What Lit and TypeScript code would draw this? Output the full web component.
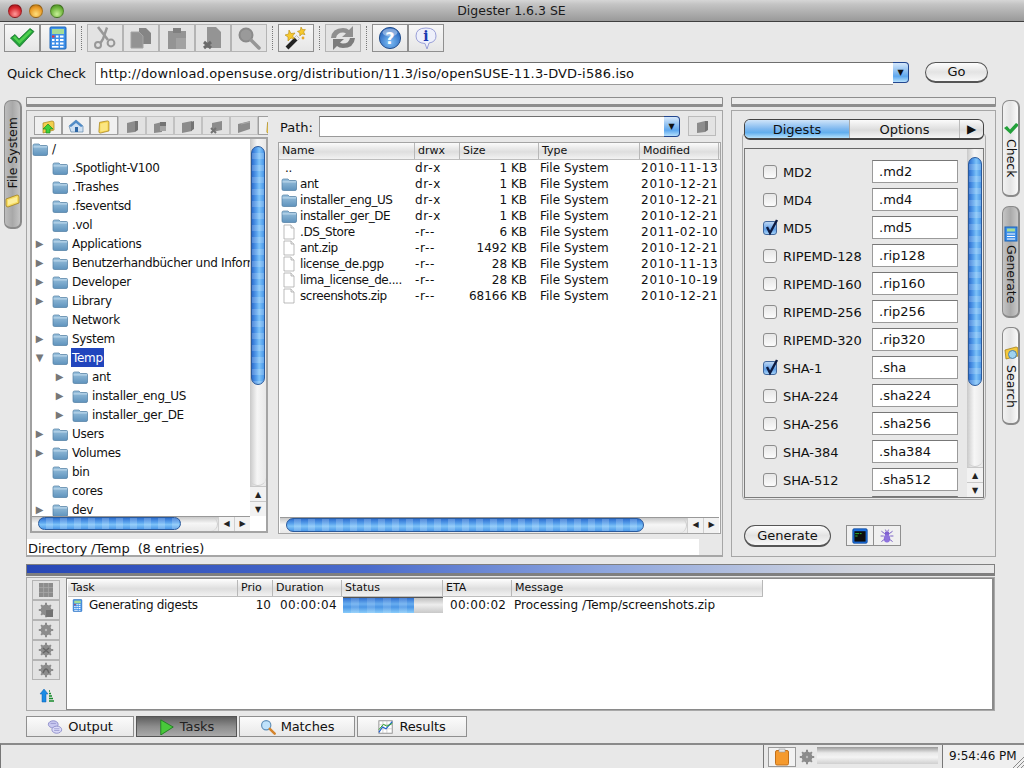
import { LitElement, html, css, svg } from "lit";
import { customElement } from "lit/decorators.js";

const g = "#8c8c8c";
const gd = "#737373";

const view = (s: number, body: unknown, vb = 24, cls = "") =>
  html`<svg class="ic ${cls}" width=${s} height=${s} viewBox="0 0 ${vb} ${vb}">${body}</svg>`;

const folderBody = svg`
  <path d="M1 4.5 Q1 3 2.5 3 H7 L8.5 4.5 H14.5 Q15.5 4.5 15.5 5.5 V13 Q15.5 14.5 14 14.5 H2.5 Q1 14.5 1 13 Z" fill="url(#fold)" stroke="#4d7ba0" stroke-width=".7"/>
  <rect x="1.4" y="5.4" width="13.7" height="1" fill="#c3dcee"/>`;
const folder = () => view(16, folderBody, 16, "fold");
const fileIc = () => view(16, svg`<path d="M3 1 H10 L13 4 V15 H3 Z" fill="#fff" stroke="#a9a9a9" stroke-width=".8"/><path d="M10 1 V4 H13" fill="#eee" stroke="#a9a9a9" stroke-width=".8"/>`, 16);

const yellowFolder = svg`<path d="M6 5 L17 3 Q19 3 19 5 V17 L7 20 Q5 20 5 18 Z" fill="#f6d34a" stroke="#a5811c"/><path d="M7 7 L17 5 V16 L7 18 Z" fill="#fbe682"/>`;

const icons: Record<string, unknown> = {
  check: view(28, svg`<path d="M2.5 14 L7 10.5 L11 15 L22 4.5 L26 7.5 L11.5 23 Z" fill="#23a13a" stroke="#16752a" stroke-width=".8"/><path d="M5 13.5 L7 12 L11 16.5 L22 6 L24 7.5 L11.5 20 Z" fill="#4fd04e"/>`, 28),
  calc: view(24, svg`<rect x="4" y="1" width="16" height="22" rx="1" fill="#3e8fe8" stroke="#1b64b8"/><rect x="6" y="3" width="12" height="5" fill="#a6dd96"/><rect x="6" y="9.5" width="2.5" height="2" fill="#e33"/><rect x="10" y="9.5" width="2.5" height="2" fill="#fff"/><rect x="14" y="9.5" width="3.5" height="2" fill="#fff"/><rect x="6" y="13" width="2.5" height="2" fill="#fff"/><rect x="10" y="13" width="2.5" height="2" fill="#fff"/><rect x="14" y="13" width="3.5" height="2" fill="#fff"/><rect x="6" y="16.5" width="2.5" height="2" fill="#fff"/><rect x="10" y="16.5" width="2.5" height="2" fill="#fff"/><rect x="14" y="16.5" width="3.5" height="2" fill="#fff"/><rect x="6" y="20" width="6.5" height="1.6" fill="#fff"/><rect x="14" y="20" width="3.5" height="1.6" fill="#fff"/>`),
  cut: view(24, svg`<path d="M5 1 L15 14" stroke="#989898" stroke-width="2.6"/><path d="M14 1.5 L10 13 L7.5 17" stroke="#989898" stroke-width="2.4" fill="none"/><circle cx="5" cy="19" r="3" fill="none" stroke="#989898" stroke-width="2"/><circle cx="18" cy="17" r="3.4" fill="none" stroke="#989898" stroke-width="2"/>`),
  copy: view(24, svg`<path d="M10 2 H17 L22 7 V18 H10 Z" fill="#858585"/><path d="M2 6 H10 L14 10 V22 H2 Z" fill="#939393" stroke="#a4a4a4"/>`),
  paste: view(24, svg`<rect x="3" y="5" width="18" height="18" fill="#949494"/><rect x="8" y="2" width="8" height="5" fill="#808080"/><rect x="11" y="12" width="10" height="11" fill="#a2a2a2"/>`),
  del: view(24, svg`<path d="M6 1 H15 L20 6 V22 H6 Z" fill="#949494"/><path d="M3 16 L10 22 M10 16 L3 22" stroke="#6a6a6a" stroke-width="3"/>`),
  find: view(24, svg`<circle cx="9" cy="9" r="6.5" fill="#9a9a9a" stroke="#8a8a8a" stroke-width="2"/><path d="M14 14 L22 22" stroke="#969696" stroke-width="3.5" stroke-linecap="round"/>`),
  wand: view(24, svg`<path d="M3 22 L14 11" stroke="#222" stroke-width="4"/><path d="M12 13 L14 11" stroke="#eee" stroke-width="4"/><path d="M5 4 L7 7.5 L11 7 L8.6 10 L10.4 13 L7 12 L4 15 L4 11 L1 9 L4.6 8 Z" fill="#f7c92c" stroke="#b58a10" stroke-width=".6"/><path d="M17 1 L18.4 3.6 L21.4 3.6 L19.6 6 L21 8.6 L18 8 L15.8 10 L15.8 7 L13.4 5.4 L16.4 4.4 Z" fill="#f7c92c" stroke="#b58a10" stroke-width=".6"/><circle cx="19" cy="12" r="1.4" fill="#e8a828"/>`),
  refresh: view(26, svg`<path d="M1 13 Q2 3 13 3 Q17 3 19 5 L23 1 V12 H12 L16 8.5 Q14.5 7.5 13 7.5 Q7 7.5 6 13 Z" fill="#8f8f8f"/><path d="M25 13 Q24 23 13 23 Q9 23 7 21 L3 25 V14 H14 L10 17.5 Q11.5 18.5 13 18.5 Q19 18.5 20 13 Z" fill="#7c7c7c"/>`, 26),
  help: html`<svg class="ic" width="24" height="24" viewBox="0 0 24 24"><circle cx="12" cy="12" r="10.6" fill="url(#blueb)" stroke="#27518d"/><ellipse cx="12" cy="6.5" rx="7.5" ry="4" fill="#fff" opacity=".4"/><text x="12" y="17.5" text-anchor="middle" class="helpq">?</text></svg>`,
  info: html`<svg class="ic" width="24" height="24" viewBox="0 0 24 24"><path d="M2 10 Q2 2 12 2 Q22 2 22 10 Q22 16 15 17 L13 23 L11 17.5 Q2 17 2 10 Z" fill="#eef0fb" stroke="#9aa0d8"/><text x="12" y="15" text-anchor="middle" class="infoi">i</text></svg>`,
  up: view(16, svg`<path d="M3 5 L12 3 Q14 3 14 5 V12 L3 15 Z" fill="#f3cf4d" stroke="#a5811c" stroke-width=".7"/><path d="M8 6 L13 11 H10 V15 H6 V11 H3 Z" fill="#3ed13a" stroke="#1f8a1e" stroke-width=".7"/>`, 16),
  home: view(16, svg`<path d="M1 8 L8 2 L15 8 V14 H3 Z" fill="#cfe0f2" stroke="#5f87ad" stroke-width=".7"/><path d="M1 8 L8 2 L15 8 L13 9 L8 5 L3 9 Z" fill="#4f8bc7"/><rect x="7" y="9" width="3" height="5" fill="#2d66a5"/>`, 16),
  yfolder: view(16, svg`<g transform="scale(.72) translate(-1 1)">${yellowFolder}</g>`, 16),
  gf1: view(16, svg`<path d="M3 5 L11 3 V14 L3 15 Z" fill="${g}"/><path d="M11 3 L14 3 V12 L11 14 Z" fill="${gd}"/>`, 16),
  gf2: view(16, svg`<path d="M2 6 L10 4 V14 L2 15 Z" fill="${g}"/><rect x="8" y="4" width="6" height="8" fill="${gd}"/><rect x="8" y="8" width="6" height="5" fill="#a4a4a4"/>`, 16),
  gf3: view(16, svg`<path d="M2 5 L12 3 V13 L2 15 Z" fill="${g}"/><path d="M11 4 L14 3 V11 L11 13 Z" fill="${gd}"/>`, 16),
  gf4: view(16, svg`<path d="M4 5 L14 3 V12 L4 14 Z" fill="${g}"/><path d="M3 10 L8 15 M8 10 L3 15" stroke="${gd}" stroke-width="2"/>`, 16),
  gf5: view(16, svg`<path d="M2 6 L14 3 V11 L2 15 Z" fill="${g}"/><path d="M5 6 L14 4" stroke="#aaa"/>`, 16),
  gridg: view(16, svg`<rect x="1" y="1" width="14" height="14" fill="${g}"/><path d="M5.6 1 V15 M10.4 1 V15 M1 5.6 H15 M1 10.4 H15" stroke="#a8a8a8" stroke-width=".8"/>`, 16),
  sort: view(16, svg`<path d="M1 6 L5 1 L9 6 H7 V14 H3 V6 Z" fill="#1a8be4" stroke="#0d5fb0" stroke-width=".5"/><path d="M10 13 H15 M10 10.5 H14 M10 8 H13 M10 5.5 H12 M10 3 H11" stroke="#178a2d" stroke-width="1.4"/>`, 16),
  term: view(20, svg`<rect x="1" y="1" width="18" height="18" rx="1.5" fill="#1c6fe0" stroke="#0d4a9c"/><rect x="3" y="4" width="14" height="13" fill="#0d0d0d"/><path d="M4 7 H9 M10 7 H12 M4 10 H7" stroke="#39d43c" stroke-width="1"/>`, 20),
  bug: view(20, svg`<ellipse cx="10" cy="7" rx="3" ry="3" fill="#7f5fd0"/><ellipse cx="10" cy="13" rx="4" ry="5" fill="#8e72dd"/><path d="M3 4 L7 7 M17 4 L13 7 M2 10 H6 M18 10 H14 M3 17 L7 14 M17 17 L13 14 M8 2 L9 4 M12 2 L11 4" stroke="#6a4fc0" stroke-width="1.1"/>`, 20),
  output: view(18, svg`<ellipse cx="7" cy="6" rx="5.5" ry="4" fill="#c8c8f0" stroke="#8a8ac8"/><ellipse cx="11" cy="12" rx="5.5" ry="4" fill="#dcdcf8" stroke="#8a8ac8"/><path d="M8 11 H14 M8 13 H14 M4 5 H10" stroke="#8a8ac8" stroke-width=".8"/>`, 18),
  play: view(18, svg`<path d="M2 1 L16 9 L2 18 Z" fill="#48c83a" stroke="#1c7c1e"/>`, 18),
  search: view(18, svg`<circle cx="7" cy="7" r="5.2" fill="#bfe2fb" stroke="#5f8fb8" stroke-width="1.3"/><path d="M11 11 L16.5 16.5" stroke="#d4832a" stroke-width="2.8" stroke-linecap="round"/>`, 18),
  results: view(18, svg`<rect x="1" y="2" width="15" height="14" fill="#fff" stroke="#8a8a8a"/><path d="M1 6.5 H16 M1 11 H16 M5.5 2 V16 M10 2 V16" stroke="#bbb" stroke-width=".7"/><path d="M1 15 L5 9 L9 11 L16 3" stroke="#1e5fd0" stroke-width="1.3" fill="none"/><path d="M1 12 L6 6 L10 8 L16 5" stroke="#2ca52c" stroke-width="1.1" fill="none"/>`, 18),
  clip: view(18, svg`<rect x="2.5" y="2.5" width="13" height="14.5" rx="1.5" fill="#f59a2e" stroke="#c2701a"/><rect x="6" y="1" width="6" height="3" fill="#e4e4e4" stroke="#999" stroke-width=".6"/>`, 18),
  search2: view(16, svg`<path d="M2 4 L13 1 Q15 1 15 3 V10 L3 13 Z" fill="#f3c83c" stroke="#a5811c" stroke-width=".8"/><circle cx="9.5" cy="8.5" r="4" fill="#9fd3ef" stroke="#4c7fa8"/>`, 16),
  foldtab: view(16, svg`<path d="M1 7 L12 3 Q14 3 14 5 V11 L3 15 Q1 15 1 13 Z" fill="#f7dc62" stroke="#a5811c" stroke-width=".8"/><path d="M3 8 L12 5 V10 L3 13 Z" fill="#fcee9c"/>`, 16),
};

const gear = (kind: number) => view(16, svg`
  <g fill="${g}"><circle cx="8" cy="8" r="5.4"/><path d="M7 0.8 H9 V3 H7 Z M7 13 H9 V15.2 H7 Z M0.8 7 H3 V9 H0.8 Z M13 7 H15.2 V9 H13 Z M2.4 3.8 L3.8 2.4 L5.4 4 L4 5.4 Z M12 10.6 L13.6 12.2 L12.2 13.6 L10.6 12 Z M2.4 12.2 L4 10.6 L5.4 12 L3.8 13.6 Z M10.6 4 L12.2 2.4 L13.6 3.8 L12 5.4 Z"/></g>
  ${kind === 0 ? svg`<rect x="8" y="8" width="7" height="7" fill="${gd}"/>` : kind === 1 ? svg`<circle cx="8" cy="8" r="1.2" fill="#bbb"/>` : kind === 2 ? svg`<path d="M5 6 L11 11 M11 6 L5 11" stroke="#666" stroke-width="1.4"/>` : svg`<path d="M5 11 Q8 3 11 11" stroke="#666" stroke-width="1.4" fill="none"/>`}`, 16);

type Tree = [number, string, string];
const tree: Tree[] = [
  [0, "", "/"],
  [1, "", ".Spotlight-V100"],
  [1, "", ".Trashes"],
  [1, "", ".fseventsd"],
  [1, "", ".vol"],
  [1, "r", "Applications"],
  [1, "r", "Benutzerhandbücher und Informationen"],
  [1, "r", "Developer"],
  [1, "r", "Library"],
  [1, "", "Network"],
  [1, "r", "System"],
  [1, "d", "Temp"],
  [2, "r", "ant"],
  [2, "r", "installer_eng_US"],
  [2, "r", "installer_ger_DE"],
  [1, "r", "Users"],
  [1, "r", "Volumes"],
  [1, "", "bin"],
  [1, "", "cores"],
  [1, "r", "dev"],
];
const files = [
  ["", "..", "dr-x", "1 KB", "2010-11-13"],
  ["d", "ant", "dr-x", "1 KB", "2010-12-21"],
  ["d", "installer_eng_US", "dr-x", "1 KB", "2010-12-21"],
  ["d", "installer_ger_DE", "dr-x", "1 KB", "2010-12-21"],
  ["f", ".DS_Store", "-r--", "6 KB", "2011-02-10"],
  ["f", "ant.zip", "-r--", "1492 KB", "2010-12-21"],
  ["f", "license_de.pgp", "-r--", "28 KB", "2010-11-13"],
  ["f", "lima_license_de....", "-r--", "28 KB", "2010-10-19"],
  ["f", "screenshots.zip", "-r--", "68166 KB", "2010-12-21"],
];
const digests: [string, string, boolean][] = [
  ["MD2", ".md2", false],
  ["MD4", ".md4", false],
  ["MD5", ".md5", true],
  ["RIPEMD-128", ".rip128", false],
  ["RIPEMD-160", ".rip160", false],
  ["RIPEMD-256", ".rip256", false],
  ["RIPEMD-320", ".rip320", false],
  ["SHA-1", ".sha", true],
  ["SHA-224", ".sha224", false],
  ["SHA-256", ".sha256", false],
  ["SHA-384", ".sha384", false],
  ["SHA-512", ".sha512", false],
  ["", "", false],
];

const vbar = (top: number, h: number) => html`
  <div class="vbar">
    <div class="vthumb" style="margin-top:${top}px;height:${h}px"></div>
    <div class="vtrack"></div>
    <div class="varrow">▲</div>
    <div class="varrow">▼</div>
  </div>`;
const hbar = (left: number, w: number, cls = "") => html`
  <div class="hbar ${cls}">
    <div class="hthumb" style="margin-left:${left}px;width:${w}px"></div>
    <div class="htrack"></div>
    <div class="harrow">◀</div>
    <div class="harrow">▶</div>
  </div>`;

@customElement("app-root")
export class AppRoot extends LitElement {
  static styles = css`
    :host { display: block; width: 1024px; height: 768px; overflow: hidden; }
    * { box-sizing: border-box; }
    .app { width: 1024px; height: 768px; display: flex; flex-direction: column; background: #e8e8e8; color: #111; overflow: hidden;
      font: 12px/16px "DejaVu Sans", sans-serif; }
    .ic { display: block; flex: none; }
    .defs { display: block; width: 0; height: 0; flex: none; }
    .helpq { font: bold 16px "DejaVu Sans", sans-serif; fill: #fff; }
    .infoi { font: bold 14px "DejaVu Serif", serif; fill: #1a39b0; }

    .title { height: 22px; flex: none; border-bottom: 1px solid #3f3f3f; background: linear-gradient(#d6d6d6, #c4c4c4 20%, #999); display: flex; align-items: center; padding: 0 8px; gap: 7px; }
    .dot { width: 14px; height: 14px; border-radius: 50%; border: 1px solid #0004; }
    .dot.r { background: radial-gradient(circle at 50% 75%, #ff9a9a, #d5262c 60%, #8e1015); }
    .dot.y { background: radial-gradient(circle at 50% 75%, #ffdf7c, #e99a25 60%, #a0620c); }
    .dot.g { background: radial-gradient(circle at 50% 75%, #c8f098, #6cb33a 60%, #3c7a1a); }
    .titletext { flex: 1; text-align: center; font-size: 12.5px; margin-right: 64px; color: #1a1a1a; }

    .toolbar { height: 30px; flex: none; padding: 2px 0 0 4px; display: flex; }
    .tb { width: 36px; height: 28px; border: 1px solid #8f8f8f; background: linear-gradient(#f7f7f7, #e6e6e6); display: flex; align-items: center; justify-content: center; margin-right: 0; }
    .tb.dis { border-color: #b4b4b4; background: #e3e3e3; }
    .sep { width: 1px; height: 24px; margin: 2px 5px 0 5px; border-left: 1px dotted #777; }

    .quick { flex: none; margin-top: 10px; height: 23px; display: flex; padding-left: 7px; }
    .qlabel { width: 88px; font-size: 13px; line-height: 24px; letter-spacing: -.2px; }
    .combo { background: #fff; border: 1px solid #9a9a9a; border-top-color: #6f6f6f; border-right: 0; font-size: 13px; line-height: 22px; padding-left: 4px; }
    .combo.url { width: 798px; letter-spacing: .15px; white-space: nowrap; overflow: hidden; }
    .cbtn { width: 16px; height: 21px; border: 1px solid #23478f; border-left: 0; border-radius: 0 4px 4px 0; background: linear-gradient(#d6e8fb, #79b4ef 55%, #5da8ef 70%, #b6e0fc); display: flex; justify-content: center; align-items: center; font-size: 8px; color: #111; }
    .pill { border: 1px solid #555; border-bottom-width: 2px; border-radius: 11px; background: linear-gradient(#fdfdfd, #e3e3e3 50%, #f7f7f7); text-align: center; font-size: 13px; }
    .go { margin-left: 16px; width: 63px; height: 21px; line-height: 18px; }

    .main { flex: none; margin-top: 12px; height: 460px; display: flex; }
    .ltabs { width: 26px; padding: 3px 0 0 4px; }
    .vtab { width: 18px; border: 1px solid #8a8a8a; border-width: 1px 2px 2px 1px; border-radius: 7px; background: linear-gradient(90deg, #f2f2f2, #e4e4e4 50%, #fafafa); display: flex; align-items: center; font-size: 12.5px; gap: 3px; overflow: hidden; }
    .vtab span { writing-mode: vertical-lr; line-height: 16px; }
    .ltab { height: 129px; background: linear-gradient(90deg, #bcbcbc, #a8a8a8 50%, #c4c4c4); flex-direction: column-reverse; justify-content: flex-start; padding-bottom: 19px; }
    .ltab span { transform: rotate(180deg); }
    .lcol { width: 697px; }
    .rcol { width: 265px; margin-left: 8px; }
    .rtabs { padding-left: 6px; padding-top: 3px; display: flex; flex-direction: column; gap: 9px; width: 24px; }
    .rtab { flex-direction: column; padding-top: 19px; }
    .rtab.check { height: 97px; }
    .rtab.gen { height: 112px; background: linear-gradient(90deg, #c4c4c4, #aaa 50%, #c8c8c8); }
    .rtab.sea { height: 98px; padding-top: 18px; }
    .split { height: 10px; border: 1px solid #8d8d8d; border-bottom-width: 3px; background: #ececec; border-radius: 1px; margin-bottom: 3px; }

    .panel { height: 447px; border: 1px solid #a6a6a6; }
    .browser { height: 428px; display: flex; }
    .lside { width: 238px; margin-left: 3px; padding-top: 5px; }
    .ltools { height: 19px; margin-bottom: 2px; padding-left: 4px; display: flex; overflow: hidden; }
    .lt { width: 28px; height: 19px; flex: none; border: 1px solid #9f9f9f; background: #f0f0f0; display: flex; align-items: center; justify-content: center; }
    .lt.dis { background: #e2e2e2; border-color: #c2c2c2; }
    .tree { height: 396px; border: 2px solid #a4a4a4; border-left-color: #a0a0a0; display: grid; grid-template-columns: 1fr 16px; grid-template-rows: 1fr 15px; background: #fff; overflow: hidden; }
    .tlist { overflow: hidden; min-width: 0; }
    .trow { height: 19px; display: flex; align-items: center; white-space: nowrap; }
    .trow .txt { padding: 0 1px; line-height: 19px; letter-spacing: -.32px; height: 19px; margin-top: 1px; }
    .trow .arrow { width: 20px; flex: none; font-size: 10px; color: #777; text-align: center; padding-right: 5px; }
    .trow .fold { margin-right: 3px; }
    .l0 .arrow { width: 0; padding: 0; }
    .l2 { padding-left: 20px; }
    .sel .txt { background: #2145bd; color: #fff; margin-top: 0; line-height: 21px; }

    .vbar { display: flex; flex-direction: column; background: linear-gradient(90deg, #c9c9c9, #f6f6f6 45%, #e8e8e8); min-height: 0; overflow: hidden; }
    .vthumb { flex: none; margin: 0 1px; border: 1px solid #2a5a9c; border-radius: 7px; background: repeating-linear-gradient(transparent 0 6px, #ffffff30 6px 12px), linear-gradient(90deg, #2d6fd0, #5ba4ee 40%, #7ec3f8 60%, #4a97e8); }
    .vtrack { flex: 1; border-radius: 0 0 8px 8px; border-bottom: 1px solid #cfcfcf; }
    .varrow { height: 15px; flex: none; font-size: 8px; line-height: 15px; text-align: center; background: #f2f2f2; border-top: 1px solid #c8c8c8; color: #222; }
    .hbar { display: flex; background: linear-gradient(#c9c9c9, #f6f6f6 45%, #e8e8e8); overflow: hidden; border-top: 1px solid #999; }
    .hthumb { flex: none; border: 1px solid #2a5a9c; border-radius: 7px; margin-bottom: 1px; background: repeating-linear-gradient(90deg, transparent 0 7px, #ffffff30 7px 14px), linear-gradient(#2d6fd0, #5ba4ee 40%, #7ec3f8 60%, #4a97e8); }
    .htrack { flex: 1; border-radius: 0 8px 8px 0; border-right: 1px solid #cfcfcf; }
    .harrow { width: 16px; flex: none; font-size: 8px; line-height: 14px; text-align: center; background: #f2f2f2; border-left: 1px solid #cfcfcf; color: #222; }
    .corner { background: #fff; }

    .rside { width: 443px; margin-left: 10px; padding-top: 5px; }
    .pathrow { height: 21px; margin-bottom: 5px; display: flex; }
    .plabel { width: 41px; padding-left: 2px; font-size: 13px; line-height: 23px; }
    .combo.path { width: 345px; }
    .pbtn { margin-left: 8px; width: 28px; height: 20px; border: 1px solid #bbb; background: #e3e3e3; display: flex; align-items: center; justify-content: center; }
    .ftable { height: 392px; border: 1px solid #a4a4a4; background: #fff; display: flex; flex-direction: column; }
    .hdr { display: grid; flex: none; height: 17px; background: linear-gradient(#fbfbfb, #dedede 55%, #f2f2f2); border-bottom: 1px solid #bdbdbd; font-size: 11px; line-height: 16px; }
    .hdr div { padding-left: 3px; border-right: 1px solid #b8b8b8; white-space: nowrap; overflow: hidden; }
    .fcols { grid-template-columns: 136px 45px 79px 101px 79px; }
    .frows { flex: 1; overflow: hidden; }
    .frow { height: 16px; display: grid; grid-template-columns: 136px 45px 79px 101px 79px; line-height: 16px; white-space: nowrap; }
    .fname { display: flex; align-items: center; gap: 3px; padding-left: 2px; overflow: hidden; letter-spacing: -.42px; }
    .fname.dots { padding-left: 6px; }
    .right { text-align: right; padding-right: 12px; }
    .perm { letter-spacing: .75px; }
    .cell2 { padding-left: 1px; overflow: hidden; letter-spacing: .78px; }
    .cell3 { padding-left: 1px; }
    .fhbar { height: 16px; margin: 0 1px; flex: none; }

    .statusline { height: 17px; display: flex; font-size: 13px; line-height: 19px; border-bottom: 1px solid #a6a6a6; margin-bottom: -1px; }
    .statusline .w { width: 672px; background: #fff; padding-left: 1px; letter-spacing: -.1px; }

    .rpanel { padding: 8px 0 0 11px; }
    .dtabs { position: relative; width: 240px; margin-left: 1px; height: 21px; display: flex; border: 1px solid #444; border-bottom-width: 2px; border-radius: 6px; overflow: hidden; font-size: 13px; line-height: 19px; text-align: center; background: linear-gradient(#fbfbfb, #dcdcdc 55%, #f5f5f5); }
    .dt1 { width: 105px; background: linear-gradient(#cfe4f9, #7db7ef 50%, #62afee 70%, #b6e2fc); border-right: 1px solid #aaa; }
    .dt2 { width: 110px; border-right: 1px solid #bbb; }
    .dt3 { flex: 1; font-size: 12px; }
    .tabbox { margin: -7px 0 0 -1px; width: 244px; height: 367px; border: 1px solid #ababab; border-radius: 4px; padding: 14px 1px 1px; }
    .dbox { width: 240px; height: 350px; border: 1px solid #7c7c7c; border-top-color: #666; display: grid; grid-template-columns: 1fr 16px; overflow: hidden; }
    .dlist { padding: 11px 0 0 18px; overflow: hidden; }
    .drow { height: 28px; display: flex; font-size: 13px; line-height: 24px; }
    .cb { width: 14px; height: 14px; margin: 5px 6px 0 0; flex: none; border: 1px solid #8d8d8d; border-radius: 3px; background: linear-gradient(#e6e6e6, #fbfbfb); position: relative; }
    .cb.on { background: linear-gradient(#bcd6f4, #5f9ee6 60%, #a6d2f8); border-color: #41679c; }
    .cb svg { position: absolute; left: 0; top: -4px; }
    .dname { width: 89px; margin-top: 1px; letter-spacing: -.1px; white-space: nowrap; }
    .dinput { width: 86px; height: 23px; border: 1px solid #9a9a9a; border-top-color: #777; background: #fff; padding-left: 6px; line-height: 21px; }
    .gens { display: flex; margin: 25px 0 0 1px; }
    .genbtn { width: 87px; height: 22px; line-height: 19px; }
    .gi { width: 28px; height: 21px; border: 1px solid #8f8f8f; background: #f0f0f0; display: flex; align-items: center; justify-content: center; }
    .gi.first { margin-left: 15px; margin-right: -1px; }
    .gi svg { width: 16px; height: 16px; }

    .progress { flex: none; margin: 7px 0 0 26px; width: 969px; height: 12px; border: 1px solid #7f7f7f; border-bottom-width: 3px; background: linear-gradient(90deg, #2747b6, #4a6bcb 35%, #8ea6de 60%, #d0d4df 85%, #e8e8e8); }
    .bpanel { flex: none; margin: 1px 0 0 26px; width: 969px; height: 134px; border: 1px solid #a8a8a8; display: flex; }
    .bside { width: 39px; padding: 2px 0 0 5px; flex: none; }
    .bb { width: 28px; height: 20px; border: 1px solid #b4b4b4; background: #e2e2e2; display: flex; align-items: center; justify-content: center; }
    .sortic { margin: 8px 0 0 7px; }
    .ttable { flex: 1; border: 1px solid #8a8a8a; border-width: 1px 2px 1px 1px; background: #fff; padding: 1px; }
    .tcols { grid-template-columns: 170px 35px 69px 101px 69px 251px; width: 695px; }
    .trw { display: grid; grid-template-columns: 170px 35px 69px 101px 69px 251px; height: 16px; line-height: 16px; white-space: nowrap; }
    .trname { display: flex; align-items: center; gap: 5px; padding-left: 3px; letter-spacing: -.3px; }
    .trname svg { width: 13px; height: 15px; }
    .prio { text-align: right; padding-right: 2px; }
    .dur { padding-left: 7px; letter-spacing: .4px; }
    .pbar { background: linear-gradient(#c0c0c0, #ededed 45%, #c8c8c8); margin-left: 1px; position: relative; border-top: 1px solid #555; height: 16px; }
    .pfill { height: 100%; background: repeating-linear-gradient(90deg, transparent 0 8px, #ffffff22 8px 16px), linear-gradient(#2f6fd0, #69aef0 40%, #4b96e6 60%, #8accfa); }
    .eta { padding-left: 7px; letter-spacing: .3px; }
    .msg { padding-left: 2px; }

    .btabs { flex: none; margin: 5px 0 0 26px; height: 21px; display: flex; gap: 2px; }
    .bt { height: 21px; border: 1px solid #8f8f8f; background: linear-gradient(#fbfbfb, #e8e8e8); display: flex; align-items: center; justify-content: center; gap: 5px; font-size: 13px; letter-spacing: -.1px; }
    .bt.on { background: linear-gradient(#5f5f5f, #8c8c8c 50%, #aaa); border-color: #555; color: #222; }
    .bt svg { width: 16px; height: 16px; }
    .w108 { width: 108px; } .w101 { width: 101px; } .w116 { width: 116px; } .w110 { width: 110px; }

    .status { flex: none; margin-top: 6px; height: 25px; border-top: 2px solid #8a8a8a; border-left: 1px solid #777; display: flex; }
    .sfill { width: 762px; }
    .smem { width: 180px; border-left: 1px solid #777; display: flex; padding: 2px 0 0 4px; border-right: 1px solid #777; }
    .clipb { width: 28px; height: 20px; border: 1px solid #999; background: #f2f2f2; display: flex; align-items: center; justify-content: center; flex: none; }
    .sgear { margin: 2px 2px 0 3px; }
    .mbar { width: 121px; height: 17px; background: linear-gradient(#9a9a9a, #e8e8e8 35%, #f4f4f4 60%, #cfcfcf); }
    .clock { flex: 1; padding: 3px 0 0 6px; white-space: nowrap; background: #efefef; position: relative; }
    .grip { position: absolute; right: 0; bottom: 0; }
  `;

  private lt(name: string, dis = false) {
    return html`<div class="lt ${dis ? "dis" : ""}">${icons[name]}</div>`;
  }
  private tb(name: string, dis = false) {
    return html`<div class="tb ${dis ? "dis" : ""}">${icons[name]}</div>`;
  }

  render() {
    return html`<div class="app">
      <svg class="defs"><defs>
        <linearGradient id="fold" x1="0" y1="0" x2="0" y2="1"><stop offset="0" stop-color="#9cc3de"/><stop offset="1" stop-color="#5f93bd"/></linearGradient>
        <radialGradient id="blueb" cx=".5" cy=".7" r=".7"><stop offset="0" stop-color="#7fc0f6"/><stop offset="1" stop-color="#1e5bb8"/></radialGradient>
      </defs></svg>

      <div class="title">
        <div class="dot r"></div><div class="dot y"></div><div class="dot g"></div>
        <div class="titletext">Digester 1.6.3 SE</div>
      </div>

      <div class="toolbar">
        ${this.tb("check")}${this.tb("calc")}
        <div class="sep"></div>
        ${this.tb("cut", true)}${this.tb("copy", true)}${this.tb("paste", true)}${this.tb("del", true)}${this.tb("find", true)}
        <div class="sep"></div>
        ${this.tb("wand")}
        <div class="sep"></div>
        ${this.tb("refresh", true)}
        <div class="sep"></div>
        ${this.tb("help")}${this.tb("info")}
      </div>

      <div class="quick">
        <div class="qlabel">Quick Check</div>
        <div class="combo url">http://download.opensuse.org/distribution/11.3/iso/openSUSE-11.3-DVD-i586.iso</div>
        <div class="cbtn">▼</div>
        <div class="pill go">Go</div>
      </div>

      <div class="main">
        <div class="ltabs">
          <div class="vtab ltab">${icons.foldtab}<span>File System</span></div>
        </div>

        <div class="lcol">
          <div class="split"></div>
          <div class="panel">
            <div class="browser">
              <div class="lside">
                <div class="ltools">
                  ${this.lt("up")}${this.lt("home")}${this.lt("yfolder")}
                  ${this.lt("gf1", true)}${this.lt("gf2", true)}${this.lt("gf3", true)}${this.lt("gf4", true)}${this.lt("gf5", true)}
                  ${this.lt("yfolder")}
                </div>
                <div class="tree">
                  <div class="tlist">
                    ${tree.map(
                      ([lvl, st, name]) => html`<div class="trow l${lvl} ${st === "d" ? "sel" : ""}">
                        <div class="arrow">${st === "r" ? "▶" : st === "d" ? "▼" : ""}</div>
                        ${folder()}<div class="txt">${name}</div>
                      </div>`
                    )}
                  </div>
                  ${vbar(7, 239)}
                  ${hbar(6, 143)}
                  <div class="corner"></div>
                </div>
              </div>
              <div class="rside">
                <div class="pathrow">
                  <div class="plabel">Path:</div>
                  <div class="combo path"></div>
                  <div class="cbtn">▼</div>
                  <div class="pbtn">${icons.gf1}</div>
                </div>
                <div class="ftable">
                  <div class="hdr fcols"><div>Name</div><div>drwx</div><div>Size</div><div>Type</div><div>Modified</div></div>
                  <div class="frows">
                    ${files.map(
                      ([k, n, p, s, d]) => html`<div class="frow">
                        <div class="fname ${k ? "" : "dots"}">${k === "d" ? folder() : k === "f" ? fileIc() : ""}<span>${n}</span></div>
                        <div class="perm">${p}</div>
                        <div class="right">${s}</div>
                        <div class="cell3">File System</div>
                        <div class="cell2">${d}</div>
                      </div>`
                    )}
                  </div>
                  ${hbar(6, 358, "fhbar")}
                </div>
              </div>
            </div>
            <div class="statusline"><div class="w">Directory /Temp&nbsp; (8 entries)</div></div>
          </div>
        </div>

        <div class="rcol">
          <div class="split"></div>
          <div class="panel rpanel">
            <div class="dtabs"><div class="dt1">Digests</div><div class="dt2">Options</div><div class="dt3">▶</div></div>
            <div class="tabbox">
              <div class="dbox">
                <div class="dlist">
                  ${digests.map(
                    ([n, e, on]) => html`<div class="drow">
                      <div class="cb ${on ? "on" : ""}">${on
                        ? html`<svg width="16" height="18" viewBox="0 0 16 18"><path d="M3 9 L6 15 L13 2" fill="none" stroke="#0d1a40" stroke-width="2.4"/></svg>`
                        : ""}</div>
                      <div class="dname">${n}</div>
                      <div class="dinput">${e}</div>
                    </div>`
                  )}
                </div>
                ${vbar(8, 229)}
              </div>
            </div>
            <div class="gens">
              <div class="pill genbtn">Generate</div>
              <div class="gi first">${icons.term}</div>
              <div class="gi">${icons.bug}</div>
            </div>
          </div>
        </div>

        <div class="rtabs">
          <div class="vtab rtab check">${view(16, svg`<path d="M1 8 L4 6 L7 9.5 L13 3 L16 5 L7.5 14 Z" fill="#23a13a"/>`, 16)}<span>Check</span></div>
          <div class="vtab rtab gen">${view(16, svg`<rect x="2" y="1" width="12" height="14" fill="#3e8fe8" stroke="#1b64b8"/><rect x="4" y="2.5" width="8" height="3" fill="#a6dd96"/><path d="M4 8 H12 M4 10.5 H12 M4 13 H12" stroke="#fff"/>`, 16)}<span>Generate</span></div>
          <div class="vtab rtab sea">${icons.search2}<span>Search</span></div>
        </div>
      </div>

      <div class="progress"></div>

      <div class="bpanel">
        <div class="bside">
          <div class="bb">${icons.gridg}</div>
          <div class="bb">${gear(0)}</div>
          <div class="bb">${gear(1)}</div>
          <div class="bb">${gear(2)}</div>
          <div class="bb">${gear(3)}</div>
          <div class="sortic">${icons.sort}</div>
        </div>
        <div class="ttable">
          <div class="hdr tcols"><div>Task</div><div>Prio</div><div>Duration</div><div>Status</div><div>ETA</div><div>Message</div></div>
          <div class="trw">
            <div class="trname">${icons.calc}<span>Generating digests</span></div>
            <div class="prio">10</div>
            <div class="dur">00:00:04</div>
            <div class="pbar"><div class="pfill" style="width:71%"></div></div>
            <div class="eta">00:00:02</div>
            <div class="msg">Processing /Temp/screenshots.zip</div>
          </div>
        </div>
      </div>

      <div class="btabs">
        <div class="bt w108">${icons.output}<span>Output</span></div>
        <div class="bt on w101">${icons.play}<span>Tasks</span></div>
        <div class="bt w116">${icons.search}<span>Matches</span></div>
        <div class="bt w110">${icons.results}<span>Results</span></div>
      </div>

      <div class="status">
        <div class="sfill"></div>
        <div class="smem">
          <div class="clipb">${icons.clip}</div>
          <div class="sgear">${gear(1)}</div>
          <div class="mbar"></div>
        </div>
        <div class="clock">9:54:46 PM
          <svg class="grip" width="12" height="12" viewBox="0 0 12 12"><path d="M1 12 L12 1 M5 12 L12 5 M9 12 L12 9" stroke="#8a8a8a"/></svg>
        </div>
      </div>
    </div>`;
  }
}
